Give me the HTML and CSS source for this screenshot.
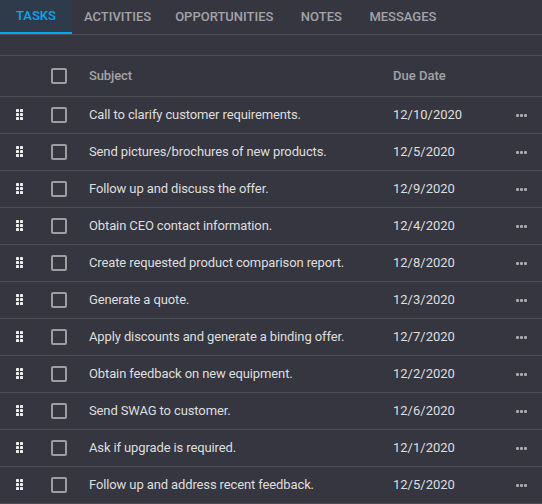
FILE: index.html
```html
<!DOCTYPE html>
<html>
<head>
<meta charset="utf-8">
<link rel="stylesheet" href="styles.css">
</head>
<body>
<div class="app">
  <div class="tabs">
    <div class="tab active">Tasks</div>
    <div class="tab">Activities</div>
    <div class="tab">Opportunities</div>
    <div class="tab">Notes</div>
    <div class="tab">Messages</div>
  </div>
  <div class="toolbar"></div>
  <div class="grid">
    <div class="row head">
      <div class="c-drag"></div>
      <div class="c-check"><span class="box"></span></div>
      <div class="c-subj">Subject</div>
      <div class="c-date">Due Date</div>
      <div class="c-menu"></div>
    </div>
    <div class="row"><div class="c-drag"><svg class="drag" width="8" height="12" viewBox="0 0 8 12"><rect x="0" y="0" width="3" height="3" rx="0.6"/><rect x="4" y="0" width="3" height="3" rx="0.6"/><rect x="0" y="4" width="3" height="3" rx="0.6"/><rect x="4" y="4" width="3" height="3" rx="0.6"/><rect x="0" y="8" width="3" height="3" rx="0.6"/><rect x="4" y="8" width="3" height="3" rx="0.6"/></svg></div><div class="c-check"><span class="box"></span></div><div class="c-subj">Call to clarify customer requirements.</div><div class="c-date">12/10/2020</div><div class="c-menu"><span class="dots"><i></i><i></i><i></i></span></div></div>
    <div class="row"><div class="c-drag"><svg class="drag" width="8" height="12" viewBox="0 0 8 12"><rect x="0" y="0" width="3" height="3" rx="0.6"/><rect x="4" y="0" width="3" height="3" rx="0.6"/><rect x="0" y="4" width="3" height="3" rx="0.6"/><rect x="4" y="4" width="3" height="3" rx="0.6"/><rect x="0" y="8" width="3" height="3" rx="0.6"/><rect x="4" y="8" width="3" height="3" rx="0.6"/></svg></div><div class="c-check"><span class="box"></span></div><div class="c-subj">Send pictures/brochures of new products.</div><div class="c-date">12/5/2020</div><div class="c-menu"><span class="dots"><i></i><i></i><i></i></span></div></div>
    <div class="row"><div class="c-drag"><svg class="drag" width="8" height="12" viewBox="0 0 8 12"><rect x="0" y="0" width="3" height="3" rx="0.6"/><rect x="4" y="0" width="3" height="3" rx="0.6"/><rect x="0" y="4" width="3" height="3" rx="0.6"/><rect x="4" y="4" width="3" height="3" rx="0.6"/><rect x="0" y="8" width="3" height="3" rx="0.6"/><rect x="4" y="8" width="3" height="3" rx="0.6"/></svg></div><div class="c-check"><span class="box"></span></div><div class="c-subj">Follow up and discuss the offer.</div><div class="c-date">12/9/2020</div><div class="c-menu"><span class="dots"><i></i><i></i><i></i></span></div></div>
    <div class="row"><div class="c-drag"><svg class="drag" width="8" height="12" viewBox="0 0 8 12"><rect x="0" y="0" width="3" height="3" rx="0.6"/><rect x="4" y="0" width="3" height="3" rx="0.6"/><rect x="0" y="4" width="3" height="3" rx="0.6"/><rect x="4" y="4" width="3" height="3" rx="0.6"/><rect x="0" y="8" width="3" height="3" rx="0.6"/><rect x="4" y="8" width="3" height="3" rx="0.6"/></svg></div><div class="c-check"><span class="box"></span></div><div class="c-subj">Obtain CEO contact information.</div><div class="c-date">12/4/2020</div><div class="c-menu"><span class="dots"><i></i><i></i><i></i></span></div></div>
    <div class="row"><div class="c-drag"><svg class="drag" width="8" height="12" viewBox="0 0 8 12"><rect x="0" y="0" width="3" height="3" rx="0.6"/><rect x="4" y="0" width="3" height="3" rx="0.6"/><rect x="0" y="4" width="3" height="3" rx="0.6"/><rect x="4" y="4" width="3" height="3" rx="0.6"/><rect x="0" y="8" width="3" height="3" rx="0.6"/><rect x="4" y="8" width="3" height="3" rx="0.6"/></svg></div><div class="c-check"><span class="box"></span></div><div class="c-subj">Create requested product comparison report.</div><div class="c-date">12/8/2020</div><div class="c-menu"><span class="dots"><i></i><i></i><i></i></span></div></div>
    <div class="row"><div class="c-drag"><svg class="drag" width="8" height="12" viewBox="0 0 8 12"><rect x="0" y="0" width="3" height="3" rx="0.6"/><rect x="4" y="0" width="3" height="3" rx="0.6"/><rect x="0" y="4" width="3" height="3" rx="0.6"/><rect x="4" y="4" width="3" height="3" rx="0.6"/><rect x="0" y="8" width="3" height="3" rx="0.6"/><rect x="4" y="8" width="3" height="3" rx="0.6"/></svg></div><div class="c-check"><span class="box"></span></div><div class="c-subj">Generate a quote.</div><div class="c-date">12/3/2020</div><div class="c-menu"><span class="dots"><i></i><i></i><i></i></span></div></div>
    <div class="row"><div class="c-drag"><svg class="drag" width="8" height="12" viewBox="0 0 8 12"><rect x="0" y="0" width="3" height="3" rx="0.6"/><rect x="4" y="0" width="3" height="3" rx="0.6"/><rect x="0" y="4" width="3" height="3" rx="0.6"/><rect x="4" y="4" width="3" height="3" rx="0.6"/><rect x="0" y="8" width="3" height="3" rx="0.6"/><rect x="4" y="8" width="3" height="3" rx="0.6"/></svg></div><div class="c-check"><span class="box"></span></div><div class="c-subj">Apply discounts and generate a binding offer.</div><div class="c-date">12/7/2020</div><div class="c-menu"><span class="dots"><i></i><i></i><i></i></span></div></div>
    <div class="row"><div class="c-drag"><svg class="drag" width="8" height="12" viewBox="0 0 8 12"><rect x="0" y="0" width="3" height="3" rx="0.6"/><rect x="4" y="0" width="3" height="3" rx="0.6"/><rect x="0" y="4" width="3" height="3" rx="0.6"/><rect x="4" y="4" width="3" height="3" rx="0.6"/><rect x="0" y="8" width="3" height="3" rx="0.6"/><rect x="4" y="8" width="3" height="3" rx="0.6"/></svg></div><div class="c-check"><span class="box"></span></div><div class="c-subj">Obtain feedback on new equipment.</div><div class="c-date">12/2/2020</div><div class="c-menu"><span class="dots"><i></i><i></i><i></i></span></div></div>
    <div class="row"><div class="c-drag"><svg class="drag" width="8" height="12" viewBox="0 0 8 12"><rect x="0" y="0" width="3" height="3" rx="0.6"/><rect x="4" y="0" width="3" height="3" rx="0.6"/><rect x="0" y="4" width="3" height="3" rx="0.6"/><rect x="4" y="4" width="3" height="3" rx="0.6"/><rect x="0" y="8" width="3" height="3" rx="0.6"/><rect x="4" y="8" width="3" height="3" rx="0.6"/></svg></div><div class="c-check"><span class="box"></span></div><div class="c-subj">Send SWAG to customer.</div><div class="c-date">12/6/2020</div><div class="c-menu"><span class="dots"><i></i><i></i><i></i></span></div></div>
    <div class="row"><div class="c-drag"><svg class="drag" width="8" height="12" viewBox="0 0 8 12"><rect x="0" y="0" width="3" height="3" rx="0.6"/><rect x="4" y="0" width="3" height="3" rx="0.6"/><rect x="0" y="4" width="3" height="3" rx="0.6"/><rect x="4" y="4" width="3" height="3" rx="0.6"/><rect x="0" y="8" width="3" height="3" rx="0.6"/><rect x="4" y="8" width="3" height="3" rx="0.6"/></svg></div><div class="c-check"><span class="box"></span></div><div class="c-subj">Ask if upgrade is required.</div><div class="c-date">12/1/2020</div><div class="c-menu"><span class="dots"><i></i><i></i><i></i></span></div></div>
    <div class="row"><div class="c-drag"><svg class="drag" width="8" height="12" viewBox="0 0 8 12"><rect x="0" y="0" width="3" height="3" rx="0.6"/><rect x="4" y="0" width="3" height="3" rx="0.6"/><rect x="0" y="4" width="3" height="3" rx="0.6"/><rect x="4" y="4" width="3" height="3" rx="0.6"/><rect x="0" y="8" width="3" height="3" rx="0.6"/><rect x="4" y="8" width="3" height="3" rx="0.6"/></svg></div><div class="c-check"><span class="box"></span></div><div class="c-subj">Follow up and address recent feedback.</div><div class="c-date">12/5/2020</div><div class="c-menu"><span class="dots"><i></i><i></i><i></i></span></div></div>
  </div>
</div>
</body>
</html>
```

FILE: styles.css
```css
html, body {
  margin: 0;
  padding: 0;
  background: #363640;
}
body {
  font-family: Roboto, "Liberation Sans", sans-serif;
  color: #dedede;
  font-size: 13px;
}
.app {
  width: 542px;
  height: 504px;
  overflow: hidden;
  background: #363640;
}
.tabs {
  display: flex;
  height: 34px;
  border-bottom: 1px solid #4e4e57;
}
.tab {
  box-sizing: border-box;
  min-width: 72px;
  padding: 0 12px;
  height: 34px;
  line-height: 33px;
  text-align: center;
  text-transform: uppercase;
  font-weight: 500;
  font-size: 13px;
  color: #a3a3a8;
  letter-spacing: 0;
}
.tab.active {
  background: #2f3a4a;
  color: #03a9f4;
  border-bottom: 2px solid #03a9f4;
  line-height: 32px;
}
.toolbar {
  height: 20px;
  border-bottom: 1px solid #4e4e57;
}
.row {
  display: flex;
  align-items: center;
  height: 36px;
  border-bottom: 1px solid #4e4e57;
}
.row.head {
  height: 40px;
  color: #a3a3a8;
  font-weight: 500;
}
.c-drag {
  width: 40px;
  display: flex;
  justify-content: center;
  align-items: center;
}
.drag {
  fill: #ececec;
  display: block;
  margin-left: -1px;
}
.c-check {
  width: 49px;
  display: flex;
  justify-content: flex-start;
  padding-left: 11px;
  box-sizing: border-box;
}
.box {
  display: block;
  width: 16px;
  height: 16px;
  box-sizing: border-box;
  border: 2px solid #9d9da2;
  border-radius: 2px;
}
.c-subj {
  width: 304px;
  white-space: nowrap;
  letter-spacing: -0.12px;
  margin-top: -2px;
}
.c-date {
  flex: 1;
  margin-top: -2px;
}
.c-menu {
  width: 42px;
  display: flex;
  justify-content: center;
}
.dots {
  display: flex;
  gap: 1px;
}
.dots i {
  display: block;
  width: 3px;
  height: 3px;
  border-radius: 1px;
  background: #a9a9ae;
}
```
